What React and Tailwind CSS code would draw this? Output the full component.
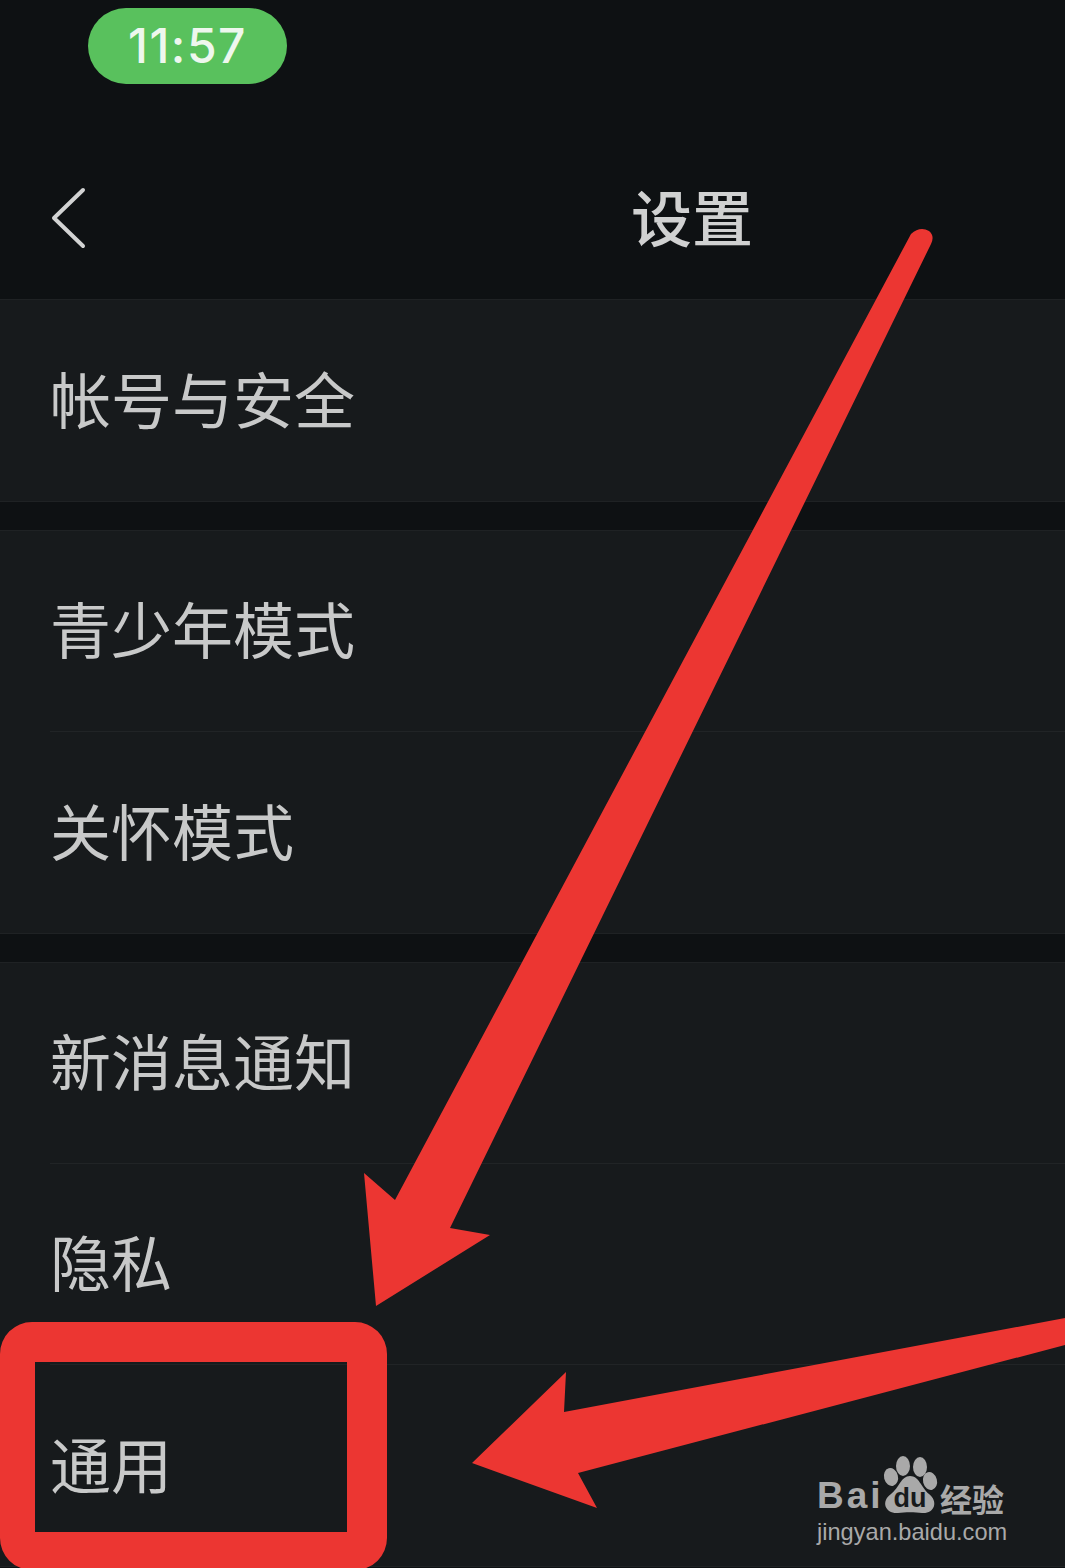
const groups = [
  ["帐号与安全"],
  ["青少年模式", "关怀模式"],
  ["新消息通知", "隐私", "通用"],
];

const cjk = "font-['Noto_Sans_CJK_SC','Noto_Sans',sans-serif]";

function Row({ label, last }) {
  return (
    <div className="h-[201px] pl-[50px]">
      <div className={`h-full flex items-center pb-[7px] text-[61px] leading-none text-[#c8c9c9] font-normal ${cjk} ${last ? "" : "border-b border-[#212426]"}`}>
        {label}
      </div>
    </div>
  );
}

function Arrows() {
  return (
    <svg className="absolute inset-0" width="1065" height="1568" viewBox="0 0 1065 1568">
      <path
        d="M911 234 Q920 226 929 231 Q935 236 931 244 L450 1228 L490 1235 L376 1306 L364 1173 L395 1200 Z"
        fill="#ec3632"
      />
      <path
        d="M1065 1318 L1065 1345 L578 1473 L597 1508 L472 1463 L566 1372 L564 1412 Z"
        fill="#ec3632"
      />
    </svg>
  );
}

function Watermark() {
  return (
    <div className="absolute left-[817px] top-[1452px] flex flex-col text-[#a9a9a9]">
      <div className="flex h-[62px] items-end">
        <span className="w-[63px] text-[37px] leading-none font-bold tracking-[3px] font-['Liberation_Sans',sans-serif]">Bai</span>
        <svg width="60" height="62" viewBox="0 0 60 62">
          <ellipse cx="23" cy="14" rx="7" ry="10" fill="#a9a9a9" />
          <ellipse cx="40" cy="15" rx="7" ry="10" fill="#a9a9a9" />
          <ellipse cx="11" cy="25" rx="7" ry="9" fill="#a9a9a9" transform="rotate(-15 11 25)" />
          <ellipse cx="50" cy="29" rx="7" ry="9" fill="#a9a9a9" transform="rotate(-15 50 29)" />
          <path d="M30 24 C39 24 41 35 49 42 C59 50 54 62 42 61 C35 60 25 60 18 61 C6 62 0 50 11 42 C19 36 21 24 30 24 Z" fill="#a9a9a9" />
          <text x="30" y="55" textAnchor="middle" fontFamily="Liberation Sans, sans-serif" fontWeight="700" fontSize="27" fill="#171a1c">du</text>
        </svg>
        <span className={`text-[32px] leading-none font-bold whitespace-nowrap ${cjk}`}>经验</span>
      </div>
      <span className="mt-[4px] text-[23.6px] leading-[28px] whitespace-nowrap font-['Liberation_Sans',sans-serif]">jingyan.baidu.com</span>
    </div>
  );
}

export default function App() {
  return (
    <div className="relative h-[1568px] w-[1065px] overflow-hidden bg-[#0e1113]">
      <header className="h-[299px]">
        <div className="pl-[88px] pt-2">
          <div className="flex h-[76px] w-[199px] items-center justify-center rounded-full bg-[#59c15d] text-[48px] font-medium tracking-[1.5px] text-[#eef7ee] font-['Inter',sans-serif]">
            11:57
          </div>
        </div>
        <div className="mt-[99px] flex h-[70px] items-center pl-[51px]">
          <svg width="36" height="62" viewBox="0 0 36 62" fill="none">
            <path d="M32 3 L3 31 L32 59" stroke="#d2d3d3" strokeWidth="4" strokeLinecap="round" strokeLinejoin="round" />
          </svg>
          <h1 className={`ml-[544px] pb-[5px] text-[61px] leading-none font-medium text-[#d0d1d1] ${cjk}`}>设置</h1>
        </div>
      </header>

      <main className="flex flex-col gap-[28px]">
        {groups.map((items, g) => (
          <section key={g} className="bg-[#171a1c] border-y border-[#1f2224]">
            {items.map((label, i) => (
              <Row key={label} label={label} last={i === items.length - 1} />
            ))}
          </section>
        ))}
      </main>

      <Arrows />
      <div className="absolute left-0 top-[1322px] h-[248px] w-[387px] rounded-[32px] border-[#ec3632] border-l-[35px] border-t-[40px] border-r-[40px] border-b-[38px]" />
      <Watermark />
    </div>
  );
}
